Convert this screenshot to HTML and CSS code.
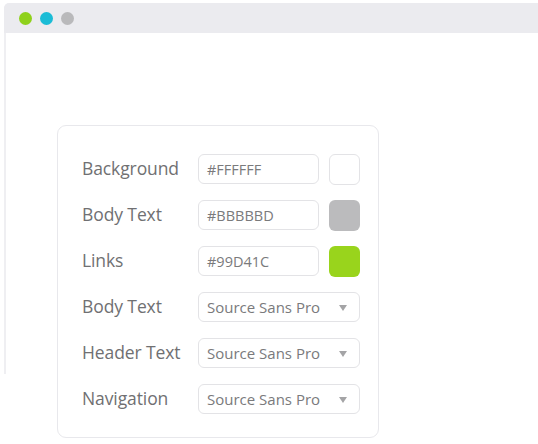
FILE: index.html
```html
<!DOCTYPE html>
<html>
<head>
<meta charset="utf-8">
<link rel="stylesheet" href="styles.css">
</head>
<body>
<div class="window">
  <div class="titlebar">
    <span class="dot dot-green"></span>
    <span class="dot dot-cyan"></span>
    <span class="dot dot-gray"></span>
  </div>
  <div class="content">
    <div class="card">
      <div class="label">Background</div>
      <div class="field">#FFFFFF</div>
      <div class="swatch swatch-white"></div>

      <div class="label">Body Text</div>
      <div class="field">#BBBBBD</div>
      <div class="swatch swatch-gray"></div>

      <div class="label">Links</div>
      <div class="field">#99D41C</div>
      <div class="swatch swatch-green"></div>

      <div class="label">Body Text</div>
      <div class="select"><span>Source Sans Pro</span><span class="caret"></span></div>

      <div class="label">Header Text</div>
      <div class="select"><span>Source Sans Pro</span><span class="caret"></span></div>

      <div class="label">Navigation</div>
      <div class="select"><span>Source Sans Pro</span><span class="caret"></span></div>
    </div>
  </div>
</div>
</body>
</html>
```

FILE: styles.css
```css
html, body {
  margin: 0;
  padding: 0;
  background: #ffffff;
}

body {
  font-family: "Open Sans", "DejaVu Sans", sans-serif;
  width: 538px;
  height: 444px;
  overflow: hidden;
}

.window {
  margin: 3px 0 0 4px;
  height: 371px;
  border-left: 2px solid #efeff2;
  border-top-left-radius: 6px;
}

.titlebar {
  height: 30px;
  background: #ebebef;
  border-top-left-radius: 5px;
  margin-left: -2px;
  display: flex;
  align-items: center;
  gap: 8px;
  padding-left: 15px;
  box-sizing: border-box;
}

.dot {
  width: 13px;
  height: 13px;
  border-radius: 50%;
  display: block;
}
.dot-green { background: #8fd11b; }
.dot-cyan { background: #1bbcd6; }
.dot-gray { background: #b9b9bb; }

.content {
  padding: 92px 0 0 51px;
}

.card {
  width: 322px;
  height: 313px;
  box-sizing: border-box;
  border: 1.5px solid #e8e8ec;
  border-radius: 9px;
  background: #fff;
  padding: 28px 19px 0 24px;
  display: grid;
  grid-template-columns: 106px 121px 31px;
  grid-auto-rows: 30px;
  column-gap: 10px;
  row-gap: 16px;
}

.label {
  font-size: 17.5px;
  color: #707072;
  align-self: center;
  margin-top: -3px;
  white-space: nowrap;
  letter-spacing: -0.1px;
}

.field, .select {
  box-sizing: border-box;
  border: 1.5px solid #e3e3e6;
  border-radius: 6px;
  font-size: 14.5px;
  color: #7a7a7c;
  display: flex;
  align-items: center;
  padding-left: 8px;
}

.swatch {
  box-sizing: border-box;
  border-radius: 6px;
  width: 31px;
  height: 31px;
}
.swatch-white { border: 1.5px solid #e3e3e6; background: #fff; }
.swatch-gray { background: #bbbbbd; }
.swatch-green { background: #99d41c; }

.select {
  grid-column: 2 / 4;
  justify-content: space-between;
  padding-right: 12px;
  font-size: 15px;
  height: 30px;
}

.caret {
  width: 0;
  height: 0;
  border-left: 4px solid transparent;
  border-right: 4px solid transparent;
  border-top: 6px solid #a4a4a6;
  margin-top: 2px;
}
```
